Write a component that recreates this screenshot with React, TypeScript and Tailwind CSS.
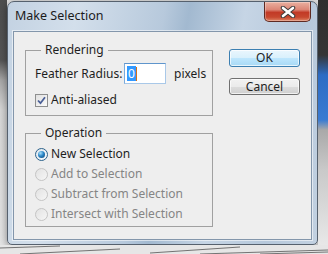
function CloseButton() {
  return (
    <div className="ml-auto mr-[6px] flex h-[20px] w-[47px] items-center justify-center rounded-b-[5px] border border-t-0 border-[#5e2a22] bg-[linear-gradient(to_bottom,#eab0a0_0%,#dc8676_40%,#c23a26_55%,#c7482f_80%,#de8566_100%)] shadow-[inset_0_0_0_1px_rgba(255,255,255,0.3)]">
      <svg width="16" height="12" viewBox="0 0 16 12">
        <path d="M3 2 L13 10 M13 2 L3 10" stroke="#3b3b3b" strokeWidth="4.5" strokeLinecap="round" />
        <path d="M3 2 L13 10 M13 2 L3 10" stroke="#ffffff" strokeWidth="2.6" strokeLinecap="round" />
      </svg>
    </div>
  );
}

function Legend({ children }: { children: React.ReactNode }) {
  return <legend className="ml-[15px] px-[4px] leading-[16px] text-[#1e1e1e]">{children}</legend>;
}

function Radio({ label, checked = false }: { label: string; checked?: boolean }) {
  return (
    <div className="flex h-[20px] items-center">
      {checked ? (
        <span className="flex h-[13px] w-[13px] items-center justify-center rounded-full border border-[#2c628b] bg-[linear-gradient(135deg,#dde6ee,#f8fbfd)]">
          <span className="h-[7px] w-[7px] rounded-full bg-[radial-gradient(circle_at_35%_30%,#a9e0fb_0%,#2b87c8_45%,#0d416e_100%)]" />
        </span>
      ) : (
        <span className="h-[13px] w-[13px] rounded-full border border-[#c4c4c4] bg-[linear-gradient(135deg,#e2e2e2,#f6f6f6)]" />
      )}
      <span className={`ml-[3px] leading-[16px] ${checked ? 'text-[#1e1e1e]' : 'text-[#858585]'}`}>{label}</span>
    </div>
  );
}

function Window() {
  return (
    <div className="mt-[1px] flex h-[244px] w-[311px] flex-col rounded-t-[7px] rounded-b-[5px] border border-[#56616e] bg-[linear-gradient(100deg,#c3d2e2_0%,#d3dfeb_20%,#b7c9dc_45%,#a2b9d0_52%,#c6d5e5_68%,#b6c8db_85%,#c2d1e1_100%)] shadow-[0_2px_8px_rgba(0,0,0,0.45)]">
      <div className="flex h-[29px] items-start">
        <span className="ml-[7px] mt-[6px] text-[12.5px] leading-[16px] text-[#1b1b1b]">Make Selection</span>
        <CloseButton />
      </div>
      <div className="mx-[5px] mb-[4px] flex flex-1 border border-[#8396ab] bg-[#eeeeee] shadow-[0_0_0_1px_rgba(255,255,255,0.55)]">
        <div className="ml-[11px] mt-[10px] flex w-[188px] flex-col">
          <fieldset className="border border-[#a0a0a0] px-0 pb-[7px]">
            <Legend>Rendering</Legend>
            <div className="mt-[5px] flex items-center pl-[9px]">
              <span className="w-[89px] leading-[16px]">Feather Radius:</span>
              <div className="flex h-[21px] w-[42px] items-center border border-[#a9c8e8] border-t-[#5f95cc] border-l-[#7aaadc] bg-white pl-[2px]">
                <span className="bg-[#3399ff] px-[1px] leading-[15px] text-white">0</span>
                <span className="h-[14px] w-[1px] bg-[#d4701c]" />
              </div>
              <span className="ml-[8px] leading-[16px]">pixels</span>
            </div>
            <div className="mt-[8px] flex items-center pl-[9px]">
              <span className="flex h-[13px] w-[13px] items-center justify-center border border-[#8e8f8f] bg-[linear-gradient(135deg,#e0e0e0,#fbfbfb)]">
                <svg width="9" height="9" viewBox="0 0 9 9">
                  <path d="M1 4.5 L3.5 7.2 L8 1.2" fill="none" stroke="#4a5f97" strokeWidth="1.8" />
                </svg>
              </span>
              <span className="ml-[3px] leading-[16px]">Anti-aliased</span>
            </div>
          </fieldset>
          <fieldset className="mt-[9px] border border-[#a0a0a0] px-0 pb-[2px]">
            <Legend>Operation</Legend>
            <div className="mt-[3px] pl-[9px]">
              <Radio label="New Selection" checked />
              <Radio label="Add to Selection" />
              <Radio label="Subtract from Selection" />
              <Radio label="Intersect with Selection" />
            </div>
          </fieldset>
        </div>
        <div className="ml-[16px] mt-[17px] flex flex-col gap-[11px]">
          <button className="h-[18px] w-[71px] rounded-[3px] border border-[#3c7fb1] bg-[linear-gradient(to_bottom,#eaf6fd_0%,#d9f0fc_50%,#bee6fd_51%,#a7d9f5_100%)] leading-[14px] text-[#1e1e1e] shadow-[inset_0_0_0_1px_rgba(255,255,255,0.7)]">
            OK
          </button>
          <button className="h-[17px] w-[71px] rounded-[3px] border border-[#707070] bg-[linear-gradient(to_bottom,#f2f2f2_0%,#ebebeb_50%,#dddddd_51%,#cfcfcf_100%)] leading-[14px] text-[#1e1e1e] shadow-[inset_0_0_0_1px_rgba(255,255,255,0.7)]">
            Cancel
          </button>
        </div>
      </div>
    </div>
  );
}

export default function App() {
  return (
    <div className="flex h-[254px] w-[328px] flex-col overflow-hidden bg-[#e4e4e4] font-['Noto_Sans',sans-serif] text-[12px] text-[#1e1e1e]">
      <div className="flex h-[245px] shrink-0">
        <div className="w-[7px] bg-[linear-gradient(to_bottom,#4e4e4e_0px,#555555_60px,#a8a8a8_80px,#d8d8d8_110px,#e6e6e6_100%)]" />
        <Window />
        <div className="w-[10px] bg-[linear-gradient(to_bottom,#2e2e2e_0px,#353535_55px,#2d6cc4_75px,#3a7bd2_120px,#a9a9a9_130px,#c9c9c9_170px,#e8e8e8_100%)]" />
      </div>
      <div className="flex-1 bg-[#e6e6e6]">
        <svg width="328" height="9" viewBox="0 0 328 9">
          <path d="M0 3 L60 1 M20 9 L120 4 M150 8 L240 2 M200 9 L328 5 M260 9 L328 7" stroke="#555" strokeWidth="0.8" fill="none" />
        </svg>
      </div>
    </div>
  );
}
